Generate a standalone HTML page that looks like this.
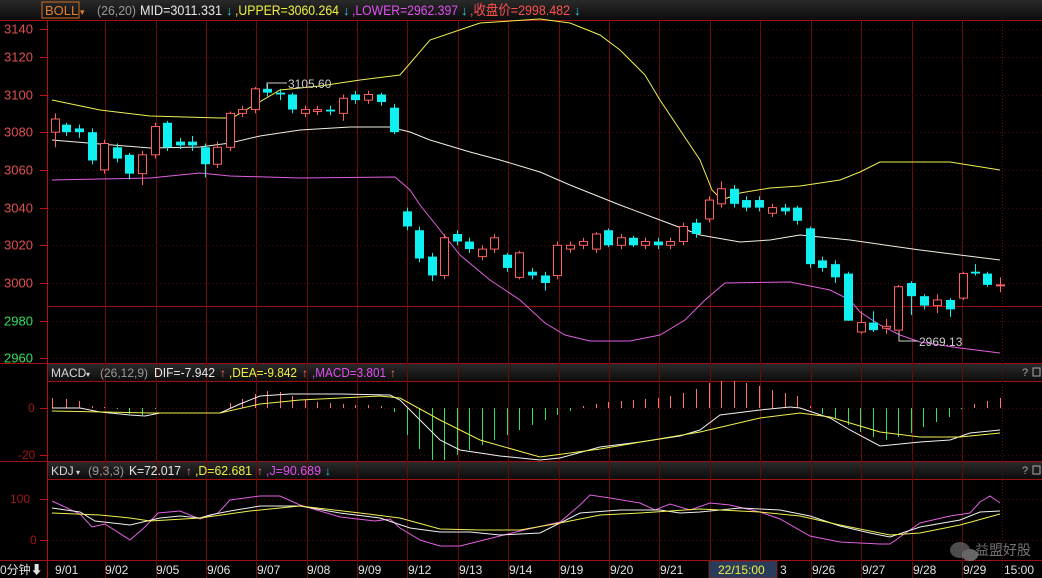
<!DOCTYPE html>
<html><head><meta charset="utf-8"><style>
html,body{margin:0;padding:0;background:#000;overflow:hidden}
body{width:1042px;height:578px;position:relative;font-family:"Liberation Sans","Noto Sans CJK SC",sans-serif}
svg{position:absolute;left:0;top:0}
text{font-family:"Liberation Sans","Noto Sans CJK SC",sans-serif}
</style></head><body>
<svg id="s" width="1042" height="578" xmlns="http://www.w3.org/2000/svg">
<defs><linearGradient id="hg" x1="0" y1="0" x2="0" y2="1"><stop offset="0" stop-color="#2a2a2a"/><stop offset="1" stop-color="#0c0c0c"/></linearGradient></defs>
<rect width="1042" height="578" fill="#000"/>
<rect x="0" y="0" width="1042" height="20" fill="url(#hg)"/>
<rect x="47" y="364" width="995" height="17" fill="url(#hg)"/>
<rect x="47" y="462" width="995" height="17" fill="url(#hg)"/>
<g id="g"></g>
<rect x="42" y="2" width="37" height="16" fill="none" stroke="#d07020" stroke-width="1"/>
<text x="45" y="15" font-size="13" fill="#e08030">BOLL</text><text x="80" y="15" font-size="9" fill="#e08030">▾</text>
<text x="97" y="15" font-size="13" fill="#9a9a9a" textLength="39" lengthAdjust="spacingAndGlyphs">(26,20)</text>
<text x="140" y="15" font-size="14" fill="#e8e8e8" textLength="82" lengthAdjust="spacingAndGlyphs">MID=3011.331</text>
<text x="226" y="15" font-size="13" fill="#30d0e0">↓</text>
<text x="235" y="15" font-size="14" fill="#f0f040" textLength="104" lengthAdjust="spacingAndGlyphs">,UPPER=3060.264</text>
<text x="343" y="15" font-size="13" fill="#30d0e0">↓</text>
<text x="352" y="15" font-size="14" fill="#e050f0" textLength="106" lengthAdjust="spacingAndGlyphs">,LOWER=2962.397</text>
<text x="461" y="15" font-size="13" fill="#30d0e0">↓</text>
<text x="470" y="15" font-size="14" fill="#ff5050" textLength="100" lengthAdjust="spacingAndGlyphs">,收盘价=2998.482</text>
<text x="574" y="15" font-size="13" fill="#30d0e0">↓</text>

<text x="51" y="377" font-size="12" fill="#d8d8d8">MACD</text><text x="86" y="377" font-size="8" fill="#d8d8d8">▾</text>
<text x="100" y="377" font-size="12" fill="#9a9a9a" textLength="48" lengthAdjust="spacingAndGlyphs">(26,12,9)</text>
<text x="154" y="377" font-size="13" fill="#e8e8e8" textLength="61" lengthAdjust="spacingAndGlyphs">DIF=-7.942</text>
<text x="220" y="377" font-size="12" fill="#ff7070">↑</text>
<text x="229" y="377" font-size="13" fill="#f0f040" textLength="68" lengthAdjust="spacingAndGlyphs">,DEA=-9.842</text>
<text x="302" y="377" font-size="12" fill="#ff7070">↑</text>
<text x="312" y="377" font-size="13" fill="#e050f0" textLength="74" lengthAdjust="spacingAndGlyphs">,MACD=3.801</text>
<text x="390" y="377" font-size="12" fill="#ff7070">↑</text>
<text x="1022" y="376" font-size="11" fill="#aaa">?</text><rect x="1033" y="368" width="7" height="8" fill="none" stroke="#aaa"/>

<text x="51" y="475" font-size="12" fill="#d8d8d8">KDJ</text><text x="76" y="475" font-size="8" fill="#d8d8d8">▾</text>
<text x="88" y="475" font-size="12" fill="#9a9a9a" textLength="36" lengthAdjust="spacingAndGlyphs">(9,3,3)</text>
<text x="129" y="475" font-size="13" fill="#e8e8e8" textLength="52" lengthAdjust="spacingAndGlyphs">K=72.017</text>
<text x="186" y="475" font-size="12" fill="#ff7070">↑</text>
<text x="195" y="475" font-size="13" fill="#f0f040" textLength="57" lengthAdjust="spacingAndGlyphs">,D=62.681</text>
<text x="257" y="475" font-size="12" fill="#ff7070">↑</text>
<text x="266" y="475" font-size="13" fill="#e050f0" textLength="55" lengthAdjust="spacingAndGlyphs">,J=90.689</text>
<text x="325" y="475" font-size="12" fill="#30d0e0">↓</text>
<text x="1022" y="474" font-size="11" fill="#aaa">?</text><rect x="1033" y="466" width="7" height="8" fill="none" stroke="#aaa"/>

<polyline points="267,89 267,83 287,83" fill="none" stroke="#ccc" stroke-width="1"/>
<text x="288" y="88" font-size="12" fill="#ccc">3105.60</text>
<polyline points="899,331 899,341 918,341" fill="none" stroke="#ccc" stroke-width="1"/>
<text x="919" y="346" font-size="12" fill="#ccc">2969.13</text>

<rect x="709" y="561" width="68" height="17" fill="#2a3c5c" stroke="#7a2020"/>
<g font-size="12" fill="#e0e0e0" id="dates"></g>
<text x="0" y="574" font-size="12" fill="#e0e0e0">0分钟⬇</text>
<text x="718" y="574" font-size="12" fill="#f0f040">22/15:00</text>
<text x="1004" y="574" font-size="12" fill="#e0e0e0">15:00</text>
<g opacity="0.75"><ellipse cx="960" cy="550" rx="10" ry="8" fill="#666"/><ellipse cx="970" cy="555" rx="8" ry="6" fill="#888"/>
<text x="975" y="555" font-size="14" fill="#9a9a9a">益盟好股</text></g>
</svg>
<script>
var g=document.getElementById('g'),h='';
function Y(v){return 283-(v-3000)*1.885;}
h+='<line x1="0" y1="20.5" x2="1042" y2="20.5" stroke="#a01010"/>';
h+='<line x1="0" y1="363.5" x2="1042" y2="363.5" stroke="#a01010"/>';
h+='<line x1="47" y1="381.5" x2="1042" y2="381.5" stroke="#a01010"/>';
h+='<line x1="0" y1="461.5" x2="1042" y2="461.5" stroke="#a01010"/>';
h+='<line x1="47" y1="479.5" x2="1042" y2="479.5" stroke="#a01010"/>';
h+='<line x1="0" y1="560.5" x2="1042" y2="560.5" stroke="#a01010"/>';
h+='<line x1="47.5" y1="20" x2="47.5" y2="578" stroke="#b01010"/>';
var vx=[105,156,206,256,307,357,407,458,508,559,609,659,710,760,811,861,912,962];
vx.forEach(function(x){h+='<line x1="'+(x+.5)+'" y1="21" x2="'+(x+.5)+'" y2="578" stroke="#6a0a0a"/>';});
h+='<line x1="1002.5" y1="21" x2="1002.5" y2="578" stroke="#6a0a0a" stroke-dasharray="1,2"/>';
[3140,3120,3100,3080,3060,3040,3020,3000,2980,2960].forEach(function(v){var y=Math.round(Y(v))+.5;if(v==3140)y=29.5;if(v==3120)y=57.5;
h+='<line x1="48" y1="'+y+'" x2="1042" y2="'+y+'" stroke="#4a0808" stroke-dasharray="1,3"/>';
h+='<line x1="40" y1="'+y+'" x2="47" y2="'+y+'" stroke="#c01010"/>';
h+='<text x="4" y="'+(y+4)+'" font-size="13" fill="'+(v<3000?'#30e060':'#e05050')+'">'+v+'</text>';});
h+='<line x1="48" y1="306.5" x2="1042" y2="306.5" stroke="#a01010"/>';
[[408,'0',28],[455,'-20',18]].forEach(function(a){h+='<line x1="48" y1="'+(a[0]+.5)+'" x2="1042" y2="'+(a[0]+.5)+'" stroke="#4a0808" stroke-dasharray="1,3"/><line x1="40" y1="'+(a[0]+.5)+'" x2="47" y2="'+(a[0]+.5)+'" stroke="#c01010"/><text x="'+a[2]+'" y="'+(a[0]+4)+'" font-size="12" fill="#a01818">'+a[1]+'</text>';});
[[499,'100',10],[540,'0',30]].forEach(function(a){h+='<line x1="48" y1="'+(a[0]+.5)+'" x2="1042" y2="'+(a[0]+.5)+'" stroke="#4a0808" stroke-dasharray="1,3"/><line x1="40" y1="'+(a[0]+.5)+'" x2="47" y2="'+(a[0]+.5)+'" stroke="#c01010"/><text x="'+a[2]+'" y="'+(a[0]+4)+'" font-size="12" fill="#a01818">'+a[1]+'</text>';});
function pl(pts,c){h+='<polyline fill="none" stroke="'+c+'" stroke-width="1" points="'+pts+'"/>';}
pl('52,100 100,110 150,116 220,118 232,118 280,90 320,86 360,80 400,75 430,40 480,23 540,19 570,23 600,35 620,50 645,75 660,100 680,130 700,160 712,190 722,200 740,193 770,188 800,186 840,180 860,172 880,162 950,162 1000,170','#f0f050');
pl('52,140 100,144 150,148 200,147 230,143 260,136 300,130 350,127 390,127 410,132 430,140 470,152 500,160 540,172 570,185 620,205 660,220 700,235 740,242 770,240 800,235 850,240 920,250 1000,260','#f0f0e0');
pl('52,180 100,179 150,178 200,173 230,176 300,178 395,177 410,190 420,205 440,230 460,255 490,280 520,300 545,323 565,335 590,341 630,341 660,335 685,320 705,300 725,283 790,282 830,290 850,300 860,312 880,325 900,335 920,342 960,348 1000,353','#e060e0');
var C=[[55,3080,3087,3090,3072],[66,3084,3080,3085,3078],[79,3082,3080,3084,3077],[92,3080,3065,3082,3063],[104,3060,3074,3076,3058],[117,3072,3066,3074,3064],[129,3068,3058,3069,3055],[142,3058,3068,3070,3052],[155,3068,3083,3085,3066],[167,3085,3072,3086,3070],[180,3075,3073,3077,3071],[192,3075,3073,3078,3070],[205,3072,3063,3074,3056],[217,3063,3072,3075,3061],[230,3072,3090,3091,3070],[242,3090,3092,3094,3088],[255,3092,3103,3104,3090],[267,3103,3101,3105.6,3099],[280,3101,3100,3103,3097],[292,3100,3092,3101,3090],[305,3090,3092,3094,3088],[317,3091,3092,3094,3089],[330,3092,3091,3094,3089],[343,3090,3098,3100,3086],[355,3100,3097,3102,3095],[368,3097,3100,3102,3095],[381,3100,3096,3101,3094],[394,3093,3080,3095,3079],[407,3038,3030,3040,3028],[419,3028,3013,3030,3011],[432,3014,3004,3016,3001],[444,3004,3024,3026,3002],[457,3026,3022,3028,3020],[469,3022,3018,3024,3016],[482,3014,3018,3020,3012],[494,3018,3024,3026,3016],[507,3015,3008,3016,3006],[519,3003,3016,3017,3002],[532,3006,3004,3008,3002],[545,3004,3000,3006,2996],[557,3004,3020,3022,3002],[570,3018,3020,3022,3016],[583,3020,3022,3024,3018],[596,3018,3026,3027,3016],[608,3028,3020,3029,3019],[621,3020,3024,3026,3018],[633,3024,3020,3025,3019],[645,3020,3022,3024,3018],[658,3022,3020,3024,3018],[670,3020,3022,3024,3018],[683,3022,3030,3032,3020],[696,3032,3026,3034,3024],[709,3034,3044,3046,3032],[721,3042,3050,3054,3040],[734,3050,3042,3052,3040],[746,3044,3040,3046,3038],[759,3044,3040,3046,3038],[772,3037,3040,3042,3035],[785,3040,3038,3042,3036],[797,3040,3033,3041,3031],[810,3029,3010,3030,3008],[822,3012,3008,3014,3006],[835,3010,3003,3012,3000],[848,3005,2980,3006,2980],[861,2974,2979,2985,2973],[873,2979,2975,2985,2974],[886,2976,2977,2981,2973],[898,2975,2998,2999,2975],[911,3000,2993,3001,2983],[924,2993,2988,2994,2986],[937,2988,2991,2994,2984],[950,2991,2986,2992,2982],[963,2992,3005,3006,2991],[975,3006,3005,3010,3004],[987,3005,2999,3006,2998],[1000,2999,2999,3003,2995]];
C.forEach(function(c){var x=c[0],up=c[2]>=c[1],col=up?'#ff6060':'#10f0f0';var t=Y(Math.max(c[1],c[2])),b=Y(Math.min(c[1],c[2]));if(b-t<1)b=t+1;
h+='<line x1="'+(x+.5)+'" y1="'+Y(c[3])+'" x2="'+(x+.5)+'" y2="'+Y(c[4])+'" stroke="'+col+'"/>';
if(up)h+='<rect x="'+(x-3.5)+'" y="'+t+'" width="8" height="'+(b-t)+'" fill="#000" stroke="'+col+'"/>';
else h+='<rect x="'+(x-4)+'" y="'+t+'" width="9" height="'+(b-t)+'" fill="'+col+'"/>';});
var M={52:398,66:399,79:401,92:406,104:407,117:409,129:414,142:415,155:409,167:408,180:408,192:408,205:408,217:408,230:403,242:399,255:394,267:391,280:392,292:396,305:400,317:402,330:403,343:404,355:405,368:405,381:406,394:412,407:435,419:449,432:460,444:460,457:455,469:450,482:445,494:440,507:435,519:430,532:425,545:420,557:415,570:411,583:406,596:404,608:402,621:401,633:400,645:399,658:398,670:396,683:393,696:389,709:383,721:381,734:381,746:383,759:386,772:390,785:393,797:396,810:406,822:414,835:418,848:425,860:432,873:437,886:440,898:437,911:433,923:427,936:422,949:417,961:409,974:404,987:401,1000:398};
for(var k in M){var x=+k+.5,v=M[k];h+='<line x1="'+x+'" y1="408" x2="'+x+'" y2="'+v+'" stroke="'+(v<408?'#ff7070':'#30e060')+'"/>';}
pl('52,408 80,408 100,412 130,415 145,416 160,413 220,413 240,404 260,396 290,394 340,394 390,395 400,400 420,420 440,440 460,450 500,456 540,460 560,458 600,447 640,442 680,436 700,430 720,415 760,410 790,407 800,408 830,418 850,430 880,446 920,442 950,440 970,433 1000,430','#f0f0f0');
pl('52,411 150,413 220,413 260,404 300,400 380,396 400,398 440,420 480,440 540,457 600,449 700,432 760,418 800,413 830,417 880,432 920,437 960,437 1000,433','#f0f050');
pl('52,501 80,514 92,527 105,524 130,540 145,527 158,513 180,511 200,519 218,513 230,500 260,496 280,496 300,505 340,517 375,521 390,519 400,528 420,540 440,546 460,546 480,541 520,531 560,522 580,505 590,495 610,498 640,503 655,510 670,504 690,510 710,503 730,505 760,512 780,519 810,536 840,542 880,544 890,544 920,523 950,516 970,513 980,502 990,496 1000,503','#e060e0');
pl('52,508 80,512 95,521 130,525 160,518 180,516 200,518 210,515 230,511 260,506 300,506 340,513 380,518 410,528 440,532 470,532 500,535 540,533 580,513 620,510 660,510 680,513 700,512 740,508 780,510 810,516 840,526 870,533 890,537 920,527 960,520 980,512 1000,511','#f0f0f0');
pl('52,513 100,515 130,518 150,521 200,518 250,511 300,506 360,513 400,518 440,529 480,530 520,530 560,523 600,515 640,513 700,509 760,512 800,516 840,525 890,535 920,533 960,525 1000,514','#f0f050');
g.innerHTML=h;
var d=[[55,'9/01'],[105,'9/02'],[156,'9/05'],[207,'9/06'],[257,'9/07'],[307,'9/08'],[358,'9/09'],[408,'9/12'],[459,'9/13'],[509,'9/14'],[560,'9/19'],[610,'9/20'],[660,'9/21'],[780,'3'],[812,'9/26'],[862,'9/27'],[913,'9/28'],[963,'9/29']],dh='';
d.forEach(function(a){dh+='<text x="'+a[0]+'" y="574">'+a[1]+'</text>';});
document.getElementById('dates').innerHTML=dh;
</script>
</body></html>
